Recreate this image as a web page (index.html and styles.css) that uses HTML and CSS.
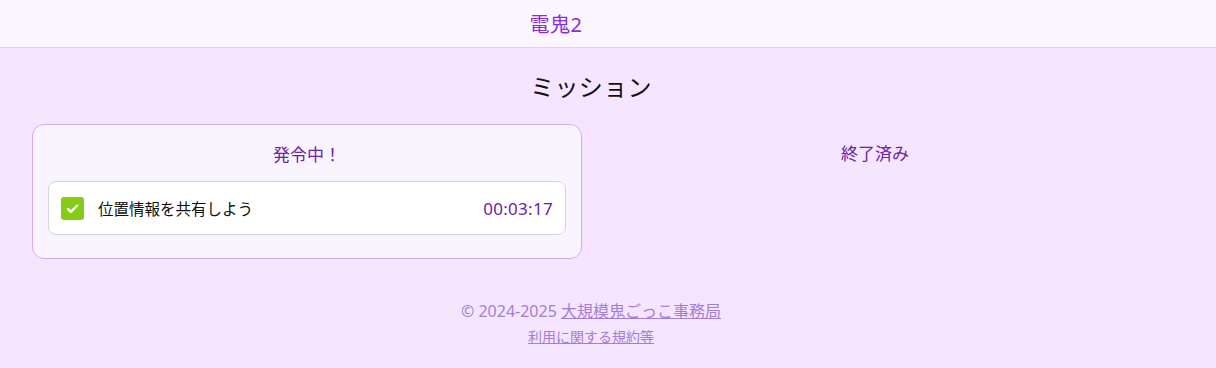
FILE: index.html
```html
<!DOCTYPE html>
<html lang="ja">
<head>
<meta charset="utf-8">
<title>電鬼2</title>
<link rel="stylesheet" href="styles.css">
</head>
<body>
<header class="header">
  <div class="header-inner"><span class="brand">電鬼2</span></div>
</header>
<main class="main">
  <h1 class="page-title">ミッション</h1>
  <div class="columns">
    <section class="card">
      <h2 class="col-title">発令中！</h2>
      <div class="mission">
        <span class="check">
          <svg viewBox="0 0 24 24" width="17" height="17"><path d="M5.5 12.5l4.2 4.2L18.5 8" fill="none" stroke="#fff" stroke-width="3.2" stroke-linecap="round" stroke-linejoin="round"/></svg>
        </span>
        <span class="mission-name">位置情報を共有しよう</span>
        <span class="timer">00:03:17</span>
      </div>
    </section>
    <section class="plain">
      <h2 class="col-title">終了済み</h2>
    </section>
  </div>
  <footer class="footer">
    <p class="copy">© 2024-2025 <a href="#" class="link">大規模鬼ごっこ事務局</a></p>
    <p class="terms"><a href="#" class="link">利用に関する規約等</a></p>
  </footer>
</main>
</body>
</html>
```
FILE: styles.css
```css
* { box-sizing: border-box; }
html, body { margin: 0; padding: 0; }
body {
  background: #f5e5ff;
  font-family: "Noto Sans", "Noto Sans CJK JP", sans-serif;
  color: #111;
  min-height: 368px;
}
.header {
  background: #faf5ff;
  border-bottom: 1px solid #e2c9f7;
  height: 48px;
}
.header-inner {
  width: 1112px;
  height: 47px;
  display: flex;
  align-items: center;
  justify-content: center;
}
.brand {
  font-size: 20px;
  color: #8a2bd8;
  letter-spacing: 0.5px;
}
.main {
  width: 1182px;
  padding: 0 32px;
}
.page-title {
  margin: 0;
  padding-top: 23px;
  height: 76px;
  text-align: center;
  font-weight: 400;
  font-size: 24px;
  line-height: 32px;
  letter-spacing: 0.3px;
  color: #111;
}
.columns {
  display: grid;
  grid-template-columns: 550px 1fr;
  gap: 18px;
  align-items: start;
}
.card {
  background: #faf4ff;
  border: 1px solid #d3a9fc;
  border-radius: 12px;
  padding: 16px 15px 23px;
}
.plain { padding: 16px 16px; }
.col-title {
  margin: 0 0 12px;
  text-align: center;
  font-weight: 400;
  font-size: 17px;
  line-height: 28px;
  color: #6b21a8;
}
.mission {
  background: #fff;
  border: 1px solid #d4d4dc;
  border-radius: 8px;
  height: 54px;
  display: flex;
  align-items: center;
  padding: 0 12px;
}
.check {
  width: 23px;
  height: 23px;
  border-radius: 3px;
  background: #84cc16;
  display: flex;
  align-items: center;
  justify-content: center;
  margin-right: 14px;
}
.mission-name {
  font-size: 15.5px;
  color: #111;
}
.timer {
  margin-left: auto;
  font-size: 17px;
  color: #6b21a8;
  letter-spacing: 0.3px;
}
.footer {
  text-align: center;
  padding-top: 41px;
  color: #a57dd6;
}
.footer p { margin: 0; }
.copy { font-size: 16px; line-height: 23px; }
.terms { font-size: 14px; line-height: 28px; }
.link { color: #a57dd6; text-decoration: underline; }
```
